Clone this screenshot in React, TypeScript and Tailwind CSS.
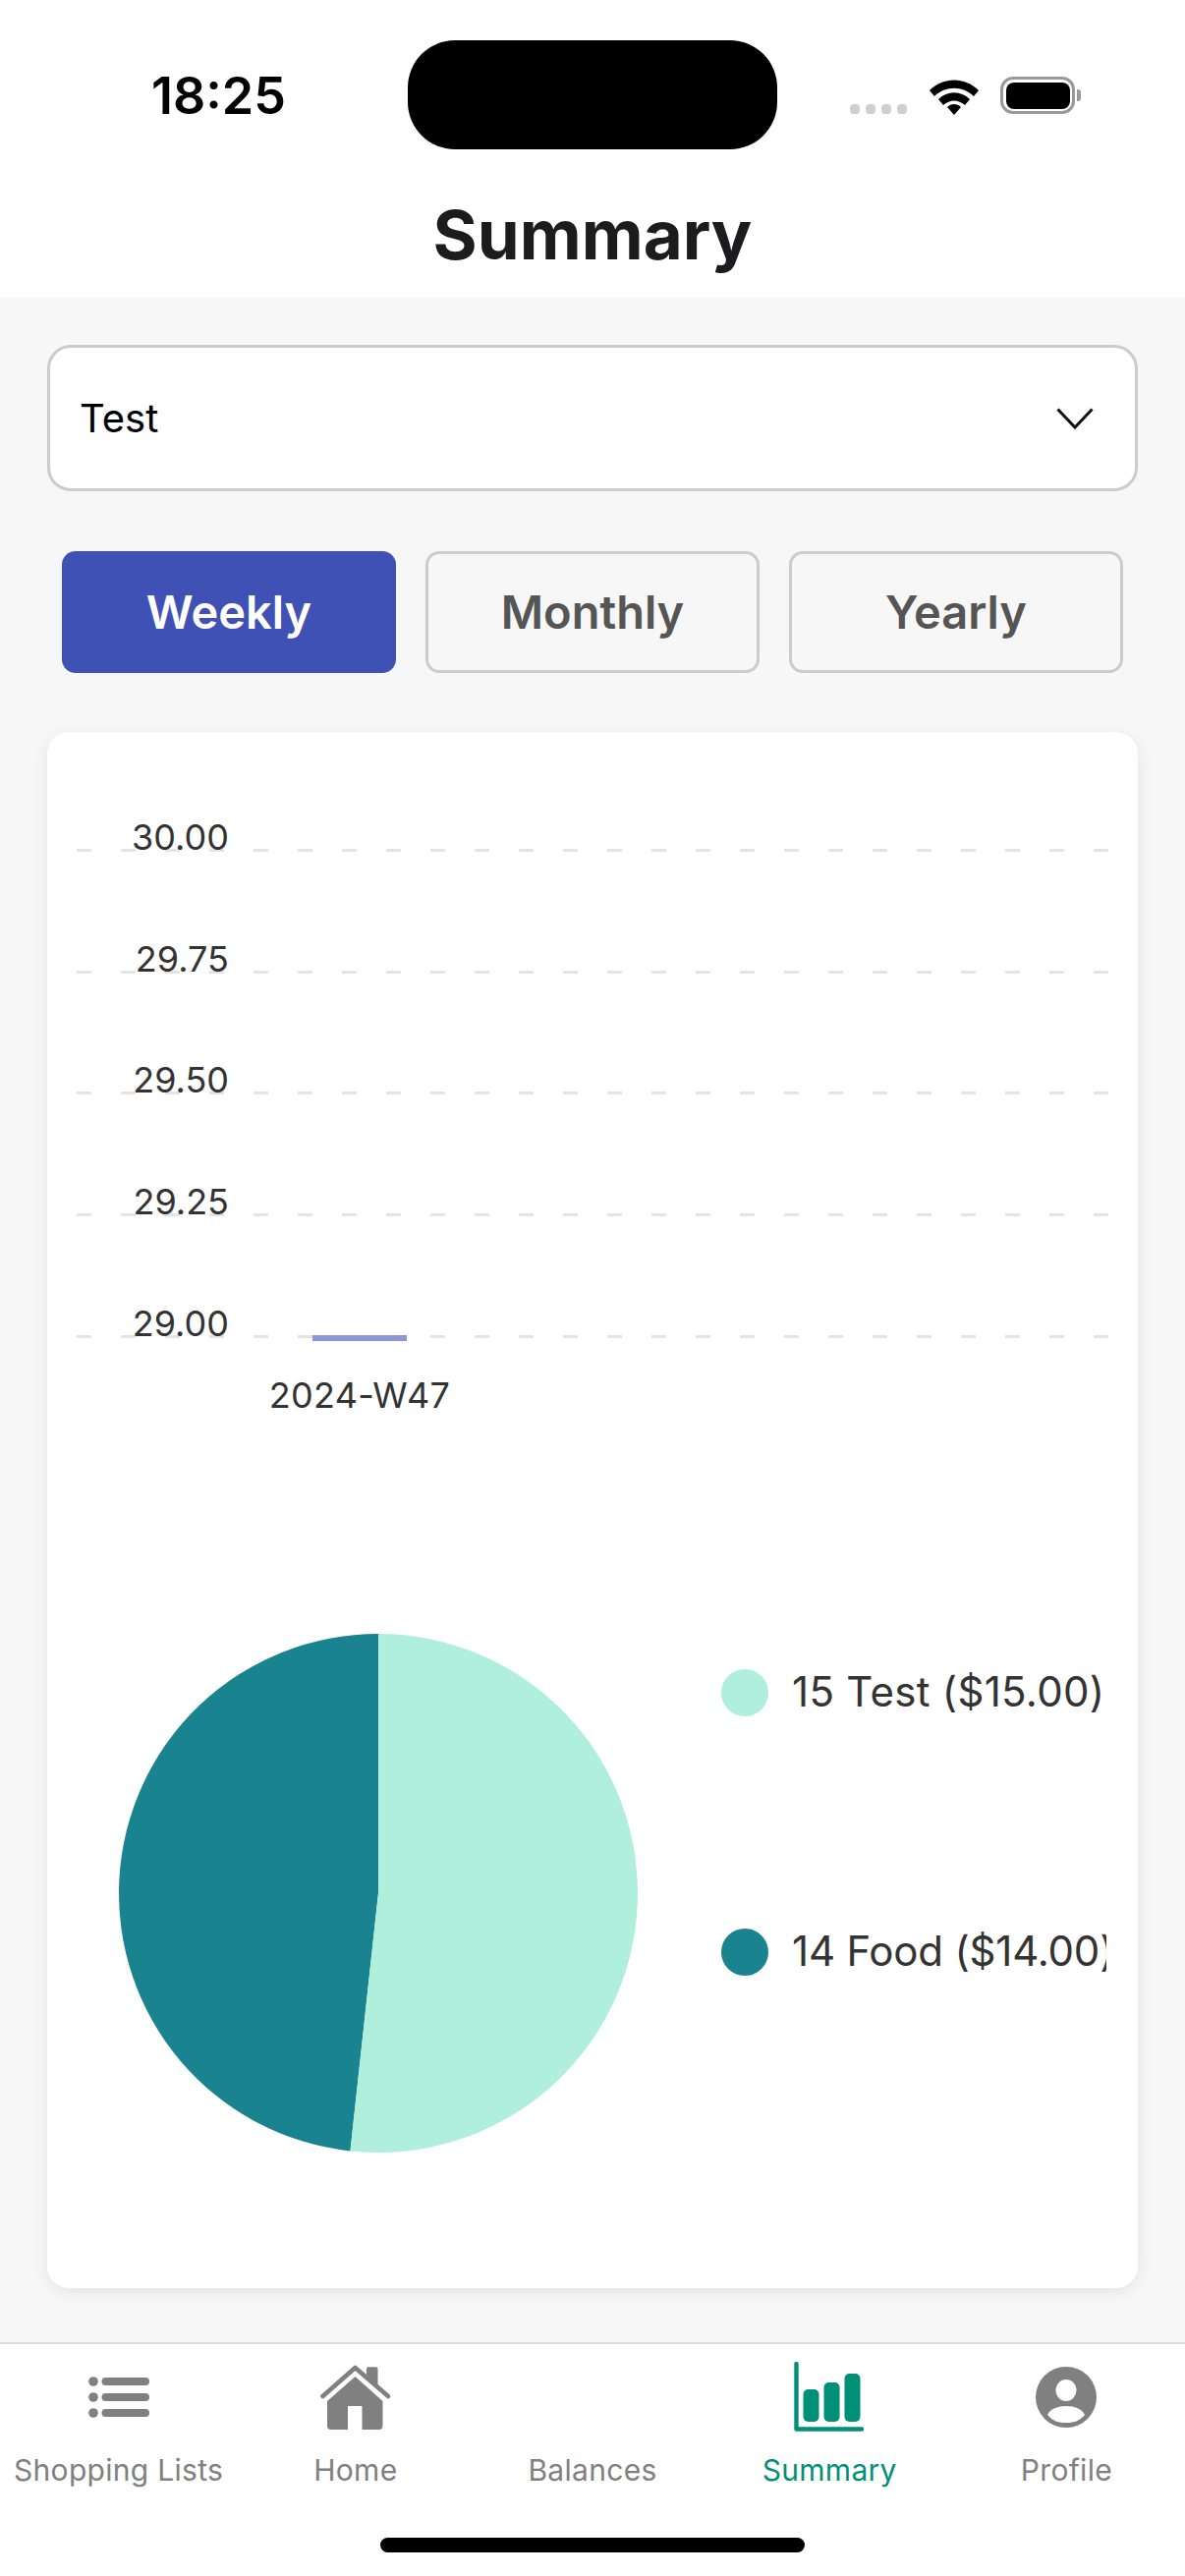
const FONT = "font-['Inter','Liberation_Sans',sans-serif]";

function StatusBar() {
  return (
    <div className="relative h-[152px]">
      <div className="absolute left-[154px] top-[68px] text-[52px] leading-[60px] font-semibold text-black">18:25</div>
      <div className="absolute left-[415px] top-[41px] h-[111px] w-[376px] rounded-[48px] bg-black" />
      <div className="absolute left-[865px] top-[106px] flex gap-[6px]">
        <span className="h-[10px] w-[10px] rounded-[4px] bg-[#cfcfcf]" />
        <span className="h-[10px] w-[10px] rounded-[4px] bg-[#cfcfcf]" />
        <span className="h-[10px] w-[10px] rounded-[4px] bg-[#cfcfcf]" />
        <span className="h-[10px] w-[10px] rounded-[4px] bg-[#cfcfcf]" />
      </div>
      <svg className="absolute left-[944px] top-[77px]" width="54" height="40" viewBox="0 0 54 40">
        <path d="M2 15 C16 1 38 1 52 15 L47 21 C36 10 18 10 7 21 Z" fill="#000" />
        <path d="M11 24 C20 15 34 15 43 24 L38 30 C31 24 23 24 16 30 Z" fill="#000" />
        <path d="M20 32 C24 28 30 28 34 32 L27 40 Z" fill="#000" />
      </svg>
      <div className="absolute left-[1018px] top-[78px] flex h-[38px] w-[76px] items-center justify-center rounded-[13px] border-[3px] border-[#999999] bg-white">
        <div className="h-[27px] w-[65px] rounded-[8px] bg-black" />
      </div>
      <div className="absolute left-[1096px] top-[91px] h-[12px] w-[4px] rounded-r-[3px] bg-[#999999]" />
    </div>
  );
}

function Tab({ label, active }: { label: string; active?: boolean }) {
  return (
    <button
      className={
        active
          ? "flex h-[124px] w-[340px] items-center justify-center rounded-[14px] bg-[#3f51b5] text-[47px] font-semibold text-white"
          : "flex h-[124px] w-[340px] items-center justify-center rounded-[14px] border-[3px] border-[#cccccc] text-[47px] font-semibold text-[#555555]"
      }
    >
      {label}
    </button>
  );
}

function GridRow({ label }: { label: string }) {
  return (
    <div className="relative h-[123.7px]">
      <div className="absolute left-0 right-0 top-0 h-[3px] bg-[repeating-linear-gradient(90deg,#e4e4e4_0,#e4e4e4_15px,transparent_15px,transparent_45px)]" />
      <div className="absolute right-[897px] top-[-34px] text-[36px] leading-[44px] text-[#333333]">{label}</div>
    </div>
  );
}

function LegendRow({ color, text, spacing }: { color: string; text: string; spacing: string }) {
  return (
    <div className="flex h-[48px] items-center">
      <span className={`h-[48px] w-[48px] shrink-0 rounded-full ${color}`} />
      <span className={`mb-[2px] ml-[24px] text-[42px] leading-[48px] whitespace-nowrap text-[#333333] ${spacing}`}>{text}</span>
    </div>
  );
}

function NavItem({ label, active, children }: { label: string; active?: boolean; children: React.ReactNode }) {
  return (
    <div className="flex flex-1 flex-col items-center">
      <div className="flex h-[72px] items-center justify-center">{children}</div>
      <div className={active ? "mt-[18px] text-[30px] leading-[40px] tracking-[0.3px] whitespace-nowrap text-[#009077]" : "mt-[18px] text-[30px] leading-[40px] tracking-[0.3px] whitespace-nowrap text-[#808080]"}>
        {label}
      </div>
    </div>
  );
}

export default function App() {
  const r = 264;
  const a = (15 / 29) * 2 * Math.PI;
  const ex = 264 + r * Math.sin(a);
  const ey = 264 - r * Math.cos(a);
  return (
    <div className={`${FONT} flex h-[2622px] w-[1206px] flex-col overflow-hidden bg-[#f7f7f7]`}>
      <header className="h-[303px] bg-white">
        <StatusBar />
        <h1 className="mt-[44px] text-center text-[69px] leading-[86px] font-bold text-[#1c1c1e]">Summary</h1>
      </header>

      <main className="flex-1 px-[48px] pt-[48px]">
        <div className="flex h-[149px] items-center justify-between rounded-[24px] border-[3px] border-[#cccccc] bg-white pl-[30px] pr-[42px]">
          <span className="text-[40px] text-black">Test</span>
          <svg width="38" height="22" viewBox="0 0 38 22" fill="none">
            <path d="M1.5 1.5 L19 20 L36.5 1.5" stroke="#111" strokeWidth="3" />
          </svg>
        </div>

        <div className="mt-[61px] flex justify-between px-[15px]">
          <Tab label="Weekly" active />
          <Tab label="Monthly" />
          <Tab label="Yearly" />
        </div>

        <section className="mt-[60px] h-[1584px] rounded-[22px] bg-white shadow-[0_4px_18px_rgba(0,0,0,0.08)]">
          <div className="relative ml-[30px] mr-[28px] pt-[119px]">
            <GridRow label="30.00" />
            <GridRow label="29.75" />
            <GridRow label="29.50" />
            <GridRow label="29.25" />
            <div className="relative h-[70px]">
              <div className="absolute left-0 right-0 top-0 h-[3px] bg-[repeating-linear-gradient(90deg,#e4e4e4_0,#e4e4e4_15px,transparent_15px,transparent_45px)]" />
              <div className="absolute right-[897px] top-[-34px] text-[36px] leading-[44px] text-[#333333]">29.00</div>
              <div className="absolute left-[240px] top-0 h-[6px] w-[96px] bg-[#8c96d9]" />
              <div className="absolute left-[186px] top-[39px] w-[204px] text-center text-[36px] leading-[44px] tracking-[0.3px] whitespace-nowrap text-[#333333]">2024-W47</div>
            </div>
          </div>

          <div className="ml-[73px] mt-[234px] flex items-start">
            <svg width="528" height="528" viewBox="0 0 528 528" className="shrink-0">
              <path d={`M264 264 L${ex} ${ey} A264 264 0 0 1 264 0 Z`} fill="#19848f" />
              <path d={`M264 264 L264 0 A264 264 0 1 1 ${ex} ${ey} Z`} fill="#b0efdb" />
            </svg>
            <div className="ml-[85px] mt-[36px] flex w-[392px] flex-col gap-[216px] overflow-hidden">
              <LegendRow color="bg-[#b0efdb]" text="15 Test ($15.00)" spacing="tracking-[0.3px]" />
              <LegendRow color="bg-[#19848f]" text="14 Food ($14.00)" spacing="tracking-[-0.2px]" />
            </div>
          </div>
        </section>
      </main>

      <nav className="relative h-[238px] border-t-2 border-[#dddddd] bg-white">
        <div className="flex pt-[18px]">
          <NavItem label="Shopping Lists">
            <svg width="62" height="42" viewBox="0 0 62 42" fill="#808080">
              <circle cx="5" cy="5" r="4.8" /><rect x="13.5" y="1" width="48.5" height="8" rx="4" />
              <circle cx="5" cy="21" r="4.8" /><rect x="13.5" y="17" width="48.5" height="8" rx="4" />
              <circle cx="5" cy="37" r="4.8" /><rect x="13.5" y="33" width="48.5" height="8" rx="4" />
            </svg>
          </NavItem>
          <NavItem label="Home">
            <svg width="72" height="66" viewBox="0 0 72 66" fill="#808080">
              <path d="M2.5 32 L35.5 3 L69 32" fill="none" stroke="#808080" strokeWidth="4.6" strokeLinecap="round" strokeLinejoin="round" />
              <path d="M47 10 V4 Q47 2.3 49 2.3 H56.5 Q58.5 2.3 58.5 4 V22 Z" />
              <path d="M35.5 12 L63.5 37 V62 Q63.5 66 59.5 66 H42.5 V42 H28 V66 H11 Q7 66 7 62 V37 Z" />
            </svg>
          </NavItem>
          <NavItem label="Balances"><span /></NavItem>
          <NavItem label="Summary" active>
            <svg width="72" height="72" viewBox="0 0 72 72" fill="#009077">
              <path d="M2.5 2 V68.5 H69" fill="none" stroke="#009077" strokeWidth="4.4" strokeLinecap="round" strokeLinejoin="round" />
              <rect x="9.5" y="28" width="16" height="33" rx="5" />
              <rect x="30.5" y="21" width="16" height="40" rx="5" />
              <rect x="51.5" y="12" width="16" height="49" rx="5" />
            </svg>
          </NavItem>
          <NavItem label="Profile">
            <svg width="62" height="62" viewBox="0 0 62 62">
              <circle cx="31" cy="31" r="31" fill="#808080" />
              <ellipse cx="31" cy="24" rx="10.5" ry="11" fill="#fff" />
              <path d="M12 49 C17 37 45 37 50 49 C44 56 38 57 31 57 C24 57 18 56 12 49 Z" fill="#fff" />
            </svg>
          </NavItem>
        </div>
        <div className="absolute left-[387px] top-[197px] h-[15px] w-[432px] rounded-full bg-black" />
      </nav>
    </div>
  );
}
